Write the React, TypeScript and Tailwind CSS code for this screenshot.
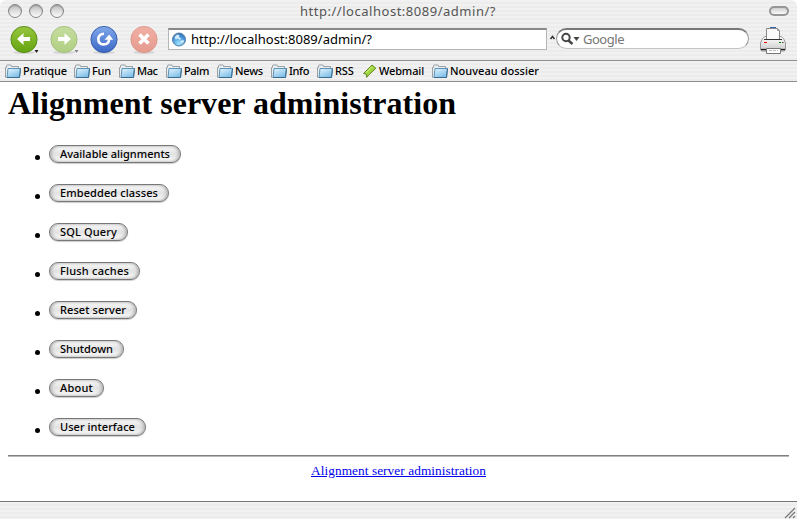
import React from 'react';

const ui = "font-['Noto_Sans','Open_Sans',sans-serif]";
const stripes = 'bg-[repeating-linear-gradient(to_bottom,#f1f1f1_0px,#f1f1f1_2px,#ececec_2px,#ececec_4px)]';

const bookmarks = [
  { label: 'Pratique', item: 'w-[69px]', text: 'w-[45px]', len: 44 },
  { label: 'Fun', item: 'w-[45px]', text: 'w-[20px]', len: 19 },
  { label: 'Mac', item: 'w-[47px]', text: 'w-[21px]', len: 20.5 },
  { label: 'Palm', item: 'w-[51px]', text: 'w-[26px]', len: 25 },
  { label: 'News', item: 'w-[54px]', text: 'w-[29px]', len: 28 },
  { label: 'Info', item: 'w-[46px]', text: 'w-[21px]', len: 20 },
  { label: 'RSS', item: 'w-[45px]', text: 'w-[20px]', len: 18.5 },
  { label: 'Webmail', item: 'w-[70px]', text: 'w-[46px]', len: 45 },
  { label: 'Nouveau dossier', item: 'w-[120px]', text: 'w-[90px]', len: 89 },
];

const actions = [
  { label: 'Available alignments', width: 'w-[132px]', len: 110 },
  { label: 'Embedded classes', width: 'w-[120px]', len: 98 },
  { label: 'SQL Query', width: 'w-[79px]', len: 57 },
  { label: 'Flush caches', width: 'w-[91px]', len: 69 },
  { label: 'Reset server', width: 'w-[88px]', len: 66 },
  { label: 'Shutdown', width: 'w-[75px]', len: 53 },
  { label: 'About', width: 'w-[55px]', len: 33 },
  { label: 'User interface', width: 'w-[97px]', len: 75 },
];

/* Spreads a label's letters so that it fills the given length. */
function Fit({ children, len }: { children: string; len: number }) {
  const ref = React.useRef<HTMLSpanElement>(null);
  const [spacing, setSpacing] = React.useState(0);
  React.useLayoutEffect(() => {
    const natural = ref.current!.getBoundingClientRect().width;
    setSpacing((len - natural) / children.length);
  }, [children, len]);
  return (
    <span ref={ref} className="whitespace-pre" style={{ letterSpacing: spacing }}>
      {children}
    </span>
  );
}

function Folder() {
  return (
    <svg width="17" height="15" viewBox="0 0 17 15" className="shrink-0">
      <defs>
        <linearGradient id="folder" x1="0" y1="0" x2=".6" y2="1">
          <stop offset="0" stopColor="#e4f5ff" />
          <stop offset="1" stopColor="#7fbfe8" />
        </linearGradient>
      </defs>
      <path d="M1.500 13.500H.5V3.500h1V1.500l.5-.5h4l.5.5v1h7v3" fill="#e9eef1" stroke="#9a9fa3" />
      <path d="M3 4.500h12.500L14.500 13.500H2z" fill="url(#folder)" stroke="#5d93b6" />
      <path d="M2 13.500h12.500l1-9" fill="none" stroke="#3b6b8b" />
    </svg>
  );
}

function Tag() {
  return (
    <svg width="16" height="15" viewBox="0 0 16 15" className="shrink-0">
      <path d="M10 1l3.900 3.200-7.200 6.900L4.600 13.400 4.500 10.300 1.500 9.500z" fill="#a1d63f" stroke="#5c8b20" strokeLinejoin="round" />
      <path d="M10 2.500L4 8.700" stroke="#d9f49b" />
    </svg>
  );
}

function Globe() {
  return (
    <svg width="15" height="15" viewBox="0 0 15 15" className="shrink-0">
      <defs>
        <radialGradient id="globe" cx=".5" cy=".8" r=".85">
          <stop offset="0" stopColor="#a5e6ff" />
          <stop offset=".6" stopColor="#4795dc" />
          <stop offset="1" stopColor="#2a5fa5" />
        </radialGradient>
      </defs>
      <circle cx="7" cy="7.500" r="6.500" fill="url(#globe)" stroke="#5580a5" />
      <path d="M2.500 5l2.500-2.500 2.500.5-.5 2 2 1.500-1 1.500-2-1.500-2.500 1zM8 9l3.500-1 .5 1.500-2 2z" fill="#e6f8ff" opacity=".85" />
    </svg>
  );
}

function Orb({ kind }: { kind: 'back' | 'forward' | 'reload' | 'stop' }) {
  const colors = {
    back: ['#98c63d', '#64a410', '#518712'],
    forward: ['#c6dda0', '#b0cf83', '#a0bd7b'],
    reload: ['#80a8ea', '#3c68c6', '#3158a5'],
    stop: ['#f2b0a5', '#e69a8e', '#d8958a'],
  }[kind];
  return (
    <svg width="30" height="31" viewBox="0 0 30 31" className="shrink-0">
      <defs>
        <linearGradient id={kind} x1="0" y1="0" x2="0" y2="1">
          <stop offset="0" stopColor={colors[0]} />
          <stop offset="1" stopColor={colors[1]} />
        </linearGradient>
      </defs>
      <ellipse cx="14" cy="26.500" rx="11" ry="1.500" fill="#000" opacity=".12" />
      <circle cx="14" cy="13.500" r="13.100" fill={`url(#${kind})`} stroke={colors[2]} strokeWidth=".9" />
      {kind === 'back' && <path d="M7 13l6.500-6v4H20v4h-6.500v4z" fill="#fff" />}
      {kind === 'forward' && <path d="M21 13l-6.500-6v4H8v4h6.500v4z" fill="#fff" />}
      {kind === 'stop' && <path d="M9.500 8.500l9 9m0-9l-9 9" stroke="#fff" strokeWidth="3.600" />}
      {kind === 'reload' && (
        <>
          <path d="M14 7.700C6.500 8 6.500 18.400 13.500 18.400c3.500 0 5.500-2 5.700-5.400" fill="none" stroke="#fff" strokeWidth="2.600" />
          <path d="M14.500 13.800l4.700-5.300 4 5.300z" fill="#fff" />
        </>
      )}
      {(kind === 'back' || kind === 'forward') && (
        <path d="M24.500 24h4l-2 3z" fill={kind === 'back' ? '#222' : '#888'} />
      )}
    </svg>
  );
}

function Printer() {
  return (
    <svg width="28" height="29" viewBox="0 0 28 29" className="shrink-0">
      <defs>
        <linearGradient id="printer" x1="0" y1="0" x2="0" y2="1">
          <stop offset="0" stopColor="#fff" />
          <stop offset="1" stopColor="#c9c9c9" />
        </linearGradient>
      </defs>
      <path d="M10 .500h6" stroke="#3367ac" />
      <path d="M2.500 11.500L5 9.500h16l2.500 2L25.500 16v7l-1.500 1H2l-1.500-1V16z" fill="url(#printer)" stroke="#999" />
      <path d="M6.500 12.500V1.500h11L19.500 3.500v9z" fill="#fafafa" stroke="#888" />
      <path d="M17.500 1.500v2h2" fill="none" stroke="#999" />
      <path d="M4 12.500h18" stroke="#333" />
      <path d="M4 15.500h3" stroke="#f00" />
      <path d="M19 15.500h2" stroke="#080" />
      <path d="M22 15.500h1.500" stroke="#444" />
      <path d="M1 22.500h24" stroke="#222" strokeWidth="1.300" />
      <path d="M6.500 21.500h14v5h-14z" fill="#fff" stroke="#777" />
      <path d="M9 23.500h9" stroke="#bbb" strokeDasharray="3 1" />
    </svg>
  );
}

function WindowDot() {
  return <span className="size-[14px] rounded-full border border-[#858585] bg-linear-to-b from-[#bcbcbc] via-[#dedede] to-[#fafafa] shadow-[inset_0_1px_1px_#999]" />;
}

export default function App() {
  return (
    <div className="flex h-[519px] w-[797px] flex-col overflow-hidden bg-white text-black">
      <div className={`flex h-[60px] flex-col rounded-t-[6px] ${stripes}`}>
        <div className="flex h-[22px] items-center pl-2 pr-2">
          <div className="flex w-[56px] justify-between">
            <WindowDot />
            <WindowDot />
            <WindowDot />
          </div>
          <div className={`flex grow pl-[236px] text-[13px] leading-[20px] text-[#555] ${ui}`}>
            <Fit len={196}>http://localhost:8089/admin/?</Fit>
          </div>
          <span className="h-[10px] w-[20px] rounded-full border-2 border-[#969696] bg-linear-to-b from-[#d0d0d0] to-[#fafafa]" />
        </div>
        <div className="flex h-[38px] items-start pl-[10px]">
          <div className="flex w-[158px] gap-[10px] pt-[4px]">
            <Orb kind="back" />
            <Orb kind="forward" />
            <Orb kind="reload" />
            <Orb kind="stop" />
          </div>
          <div className={`mt-[6px] flex h-[22px] w-[379px] items-center border border-[#b5b5b5] border-t-2 border-t-[#888] bg-white pl-[3px] text-[13px] leading-[20px] ${ui}`}>
            <Globe />
            <span className="w-[4px]" />
            <span className="-mt-[2px] flex">
              <Fit len={181}>http://localhost:8089/admin/?</Fit>
            </span>
          </div>
          <svg width="9" height="22" viewBox="0 0 9 22" className="mt-[6px] shrink-0">
            <path d="M3.500 11l2-2.500 2 2.500" fill="none" stroke="#333" strokeWidth="1.500" />
          </svg>
          <div className={`mt-[6px] flex h-[21px] w-[193px] items-center rounded-full border border-[#999] border-t-2 border-t-[#777] border-b-[#c5c5c5] bg-white pl-[4px] text-[13px] leading-[20px] text-[#777] ${ui}`}>
            <svg width="22" height="14" viewBox="0 0 22 14" className="shrink-0">
              <circle cx="5" cy="5.500" r="3.700" fill="none" stroke="#444" strokeWidth="2" />
              <path d="M7.500 8.500l4 3.500" stroke="#444" strokeWidth="2.400" />
              <path d="M12.500 5h6l-3 4z" fill="#444" />
            </svg>
            <Fit len={41}>Google</Fit>
          </div>
          <div className="ml-[11px] mt-[5px]">
            <Printer />
          </div>
        </div>
      </div>

      <div className={`flex h-[22px] items-center border-y border-[#8e8e8e] pl-[5px] text-[11px] font-medium leading-[16px] ${stripes} ${ui}`}>
        {bookmarks.map((b) => (
          <div key={b.label} className={`flex shrink-0 items-center gap-px ${b.item}`}>
            {b.label === 'Webmail' ? <Tag /> : <Folder />}
            <span className={b.text}>
              <Fit len={b.len}>{b.label}</Fit>
            </span>
          </div>
        ))}
      </div>

      <main className="flex grow flex-col px-2 font-['Liberation_Serif',serif]">
        <h1 className="mt-px h-[41px] text-[32px] font-bold leading-[40px]">
          <Fit len={448}>Alignment server administration</Fit>
        </h1>
        <ul className="mt-[21px] flex flex-col gap-[21px] pl-[27px]">
          {actions.map((a) => (
            <li key={a.label} className="flex h-[18px] items-center">
              <span className="mr-[9px] mt-[7px] size-[5px] rounded-full bg-black" />
              <button
                className={`flex h-[18px] items-center rounded-[9px] border border-[#777] bg-linear-to-b from-[#fafafa] via-[#e2e2e2] via-50% to-[#fcfcfc] pl-[10px] text-[11px] font-medium leading-[16px] shadow-[0_1px_1px_#ccc,inset_2px_0_3px_#bbb,inset_-2px_0_3px_#bbb] ${ui} ${a.width}`}
              >
                <Fit len={a.len}>{a.label}</Fit>
              </button>
            </li>
          ))}
        </ul>
        <hr className="mt-[19px] h-[2px] w-[781px] border-t border-b border-t-[#808080] border-b-[#b9b9b9]" />
        <div className="mt-[5px] flex justify-center text-[13.3px] leading-[18px] text-[#0000ee]">
          <a href="#" className="underline">
            <Fit len={175}>Alignment server administration</Fit>
          </a>
        </div>
      </main>

      <footer className={`flex h-[18px] items-end justify-end border-t border-[#777] ${stripes}`}>
        <svg width="13" height="13" viewBox="0 0 13 13">
          <path d="M1 12L11 2M5 12l6-6M9 12l2-2" stroke="#777" strokeWidth="1.200" />
        </svg>
      </footer>
    </div>
  );
}
